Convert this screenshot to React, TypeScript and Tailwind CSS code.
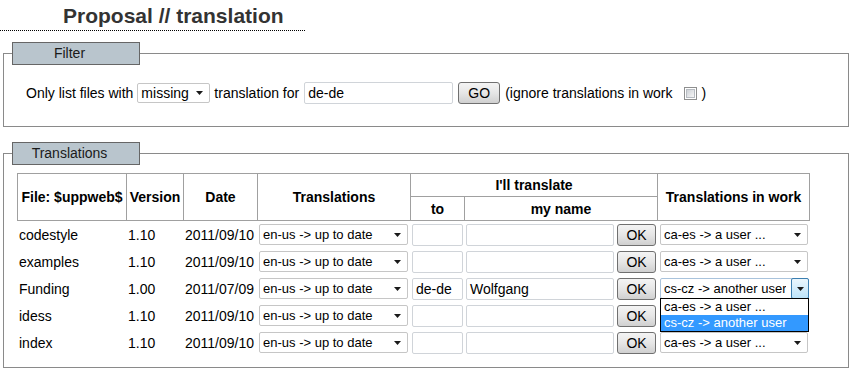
import React from "react";

const Arrow = () => (
  <svg width="7" height="4" viewBox="0 0 7 4" className="shrink-0">
    <path d="M0 0H7L3.5 4Z" fill="#1a1a1a" />
  </svg>
);

function Select({ value, className }: { value: string; className: string }) {
  return (
    <div
      className={`flex items-center justify-between border border-[#c6c6c6] rounded-[2px] bg-white pl-[3px] pr-[6px] leading-[16px] ${className}`}
    >
      <span className="whitespace-nowrap overflow-hidden">{value}</span>
      <Arrow />
    </div>
  );
}

function Input({ value = "", className }: { value?: string; className: string }) {
  return (
    <div
      className={`flex items-center border border-[#d0d4d9] rounded-[2px] bg-white pl-[3px] whitespace-nowrap leading-[16px] ${className}`}
    >
      {value}
    </div>
  );
}

function Btn({ label, className }: { label: string; className: string }) {
  return (
    <div
      className={`flex items-center justify-center border border-[#707070] rounded-[3px] bg-linear-to-b from-[#f4f4f4] via-[#e6e6e6] to-[#d0d0d0] leading-[16px] ${className}`}
    >
      {label}
    </div>
  );
}

function Legend({ label }: { label: string }) {
  return (
    <legend className="ml-[8px] w-[128px] h-[23px] border border-[#666666] bg-[#b9c5cd] text-left">
      <div className="w-[113px] text-center leading-[21px] text-[#1a1a1a]">{label}</div>
    </legend>
  );
}

const rows = [
  { file: "codestyle", ver: "1.10", date: "2011/09/10" },
  { file: "examples", ver: "1.10", date: "2011/09/10" },
  { file: "Funding", ver: "1.00", date: "2011/07/09", to: "de-de", name: "Wolfgang", open: true },
  { file: "idess", ver: "1.10", date: "2011/09/10" },
  { file: "index", ver: "1.10", date: "2011/09/10" },
];

const th = "flex items-center justify-center border-[#a0a0a0] font-bold whitespace-nowrap leading-[16px]";

export default function App() {
  return (
    <div className="w-[852px] h-[374px] bg-white overflow-hidden text-[14px] text-black font-['Liberation_Sans',Arial,sans-serif]">
      <div className="w-[305px] border-b border-dotted border-black pt-[4px] pb-[2px] pl-[63px]">
        <h1 className="text-[21px] leading-[24px] font-bold text-[#333333] whitespace-nowrap">
          Proposal // translation
        </h1>
      </div>

      <fieldset className="mx-[3px] mt-[11px] border border-[#8a8a8a] min-w-0">
        <Legend label="Filter" />
        <div className="flex items-center h-[22px] pl-[22px] mt-[17px] mb-[22px] leading-[16px] whitespace-nowrap">
          <span>Only list files with</span>
          <Select value="missing" className="ml-[4px] w-[73px] h-[20px]" />
          <span className="ml-[4px]">translation for</span>
          <Input value="de-de" className="ml-[5px] w-[149px] h-[22px]" />
          <Btn label="GO" className="ml-[5px] w-[42px] h-[22px]" />
          <span className="ml-[5px]">(ignore translations in work</span>
          <div className="ml-[12px] w-[13px] h-[13px] border border-[#8e8f8f] p-[1px] bg-white">
            <div className="w-full h-full border border-[#b7bcc2] bg-linear-to-br from-[#cdd1d6] to-[#f7f7f7]" />
          </div>
          <span className="ml-[4px]">)</span>
        </div>
      </fieldset>

      <fieldset className="mx-[3px] mt-[15px] border border-[#8a8a8a] min-w-0">
        <Legend label="Translations" />
        <div className="pl-[13px] pt-[8px] pb-[11px]">
          <div className="grid grid-cols-[109px_57px_74px_153px_54px_193px_153px] grid-rows-[23px_25px] w-[793px]">
            <div className={`${th} row-span-2 border-l border-t border-b`}>File: $uppweb$</div>
            <div className={`${th} row-span-2 border-l border-t border-b`}>Version</div>
            <div className={`${th} row-span-2 border-l border-t border-b`}>Date</div>
            <div className={`${th} row-span-2 border-l border-t border-b`}>Translations</div>
            <div className={`${th} col-span-2 border-l border-t`}>I'll translate</div>
            <div className={`${th} row-span-2 border-l border-t border-b border-r`}>Translations in work</div>
            <div className={`${th} border-l border-t border-b`}>to</div>
            <div className={`${th} border-l border-t border-b`}>my name</div>
          </div>
          <div className="grid grid-cols-[109px_57px_74px_153px_54px_193px_153px] auto-rows-[27px] w-[793px] leading-[16px]">
            {rows.map((r) => (
              <React.Fragment key={r.file}>
                <div className="flex items-center pl-[2px] whitespace-nowrap">{r.file}</div>
                <div className="flex items-center pl-[2px]">{r.ver}</div>
                <div className="flex items-center pl-[2px]">{r.date}</div>
                <div className="flex items-center text-[13px]">
                  <Select value="en-us -> up to date" className="ml-[2px] w-[149px] h-[21px]" />
                </div>
                <div className="flex items-center">
                  <Input value={r.to ?? ""} className="ml-[2px] w-[51px] h-[22px]" />
                </div>
                <div className="flex items-center">
                  <Input value={r.name ?? ""} className="ml-[2px] w-[148px] h-[22px]" />
                  <Btn label="OK" className="ml-[3px] w-[39px] h-[22px]" />
                </div>
                <div className="flex items-center text-[13px]">
                  {r.open ? (
                    <div className="relative z-10 ml-[3px] w-[149px] h-[21px]">
                      <div className="flex items-center justify-between w-full h-full border border-[#a9c3dc] rounded-[2px] bg-white pl-[3px] whitespace-nowrap">
                        <span className="overflow-hidden">cs-cz -&gt; another user</span>
                        <div className="flex shrink-0 items-center justify-center w-[18px] h-[21px] -mr-[1px] border border-[#3c7fb1] rounded-[2px] bg-linear-to-b from-[#eaf6fd] to-[#bde4fa]">
                          <Arrow />
                        </div>
                      </div>
                      <div className="absolute left-0 top-[20px] w-[149px] border border-black bg-white whitespace-nowrap">
                        <div className="h-[16px] leading-[16px] pl-[3px]">ca-es -&gt; a user ...</div>
                        <div className="h-[16px] leading-[16px] pl-[3px] bg-[#3399ff] text-white">cs-cz -&gt; another user</div>
                      </div>
                    </div>
                  ) : (
                    <Select value="ca-es -> a user ..." className="ml-[3px] w-[148px] h-[21px]" />
                  )}
                </div>
              </React.Fragment>
            ))}
          </div>
        </div>
      </fieldset>
    </div>
  );
}
